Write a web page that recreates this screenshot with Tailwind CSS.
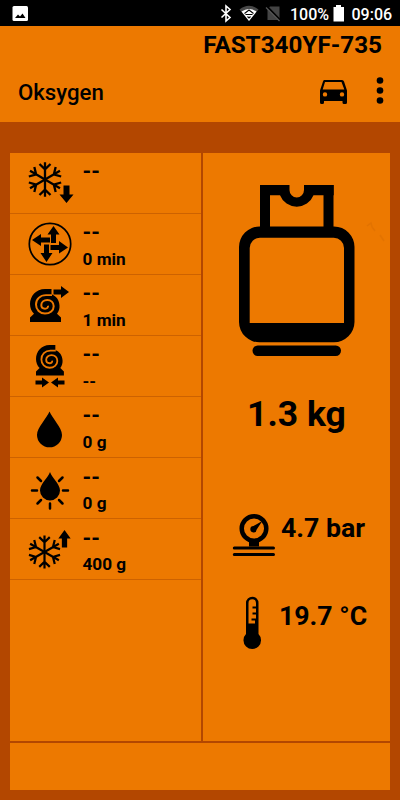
<!DOCTYPE html>
<html lang="en">
<head>
<meta charset="utf-8">
<title>Oksygen</title>
<script src="https://cdn.jsdelivr.net/npm/@tailwindcss/browser@4"></script>
</head>
<body class="w-[400px] h-[800px] overflow-hidden bg-[#b34700] font-['Roboto',sans-serif] text-black flex flex-col">
<svg class="hidden">
  <defs>
    <g id="flake" fill="none" stroke="#000" stroke-width="2.300">
      <g id="arm"><path d="M0 0V-17.3M-5.500 -15.500L0 -10.2L5.500 -15.500"/></g>
      <use href="#arm" transform="rotate(60)"/><use href="#arm" transform="rotate(120)"/><use href="#arm" transform="rotate(180)"/><use href="#arm" transform="rotate(240)"/><use href="#arm" transform="rotate(300)"/>
    </g>
    <path id="arrow" d="M0 -8.5L7 0H3V9H-3V0H-7Z"/>
    <g id="compressor">
      <path d="M21.500 0H15C6 0 0 7.500 0 15.500C0 19.500 1.500 23 4 25.500L0 29.500V34H31V29.500L27 25.500C29 23 29.700 20 29.500 17C29.200 11 26 7.500 21.500 5.500Z"/>
      <path d="M22 6.300H16C10 6.300 6 10.500 6 16C6 21.500 10 25.300 15 25.300C20 25.300 23.700 22 23.700 17.700C23.700 13.700 20.800 11.300 17.300 11.300C13.800 11.300 11.300 13.500 11.300 16.500C11.300 19 13 20.300 15 20.300C17 20.300 18.300 19 18 17.300" fill="none" stroke="#ed7900" stroke-width="2"/>
    </g>
  </defs>
</svg>

<div class="h-[26px] shrink-0 bg-black text-white flex">
  <svg class="w-[290px] h-[26px]" viewBox="0 0 290 26">
    <rect x="12.500" y="6" width="15.500" height="15" rx="1.500" fill="#fff"/>
    <path d="M15 18L18 14.500L20 16.500L22.500 13.500L25.500 18Z" fill="#000"/>
    <path d="M221.500 9.500L230 17.500L226 21V6L230 9.500L221.500 17.500" fill="none" stroke="#fff" stroke-width="1.600"/>
    <path d="M239.500 9.500Q249 2 258.500 9.500L249 21Z" fill="#484848"/>
    <path d="M241.500 11.500Q249 6.500 256.500 11.500L249 21Z" fill="#fff"/>
    <path d="M244.500 13.500L249 10L253.500 13.500M245.500 14.500H252.500M247.500 16.500L249 18L250.500 16.500" fill="none" stroke="#000" stroke-width="1.100"/>
    <path d="M270 6.500H279.500V20H267.500V9Z" fill="#444"/>
    <path d="M266.500 6L280.500 20.500" stroke="#000" stroke-width="2"/>
    <path d="M266 7.500L279.500 21" stroke="#555" stroke-width="1.200"/>
  </svg>
  <span class="w-[43px] text-[16px] leading-[29px] font-medium whitespace-nowrap">100%</span>
  <svg class="w-[18px] h-[26px]" viewBox="333 0 18 26"><path d="M336 5H341V7H344V21.500H333.500V7H336Z" fill="#fff"/></svg>
  <span class="pl-[0.500px] text-[16px] leading-[29px] font-medium whitespace-nowrap">09:06</span>
</div>

<header class="h-[96px] shrink-0 bg-[#ed7900] flex flex-col">
  <div class="h-[36px] pr-[18px] text-right text-[24.250px] leading-[38px] font-bold">FAST340YF-735</div>
  <div class="h-[60px] pl-[18px] flex justify-between">
    <h1 class="text-[22.200px] leading-[60px] font-medium">Oksygen</h1>
    <svg class="w-[90px] h-[60px]" viewBox="310 62 90 60">
      <path fill-rule="evenodd" d="M324 80H342Q343.500 80 344 81.500L347 90.500V102.500Q347 104 345.500 104H344Q342.500 104 342.500 102.500V101H324V102.500Q324 104 322.500 104H321.500Q320 104 320 102.500V90.500L323 81.500Q323.500 80 324 80ZM325 82L322.700 89.500H344.300L341.500 82ZM325 92.200A2.200 2.200 0 1 0 325 96.600A2.200 2.200 0 1 0 325 92.200ZM342 92.200A2.200 2.200 0 1 0 342 96.600A2.200 2.200 0 1 0 342 92.200Z"/>
      <circle cx="380" cy="80.500" r="3.300"/><circle cx="380" cy="90.500" r="3.300"/><circle cx="380" cy="100.500" r="3.300"/>
    </svg>
  </div>
</header>

<main class="mt-[31px] mx-[10px] h-[637px] shrink-0 flex flex-col gap-[2px]">
  <div class="h-[588px] flex gap-[2px]">
    <section class="w-[191px] bg-[#ed7900] flex flex-col">
      <div class="h-[61px] shrink-0 border-b border-[#cd6200] flex">
        <svg class="w-[72px] h-[60px]" viewBox="10 153 72 60"><use href="#flake" transform="translate(45 179.500)"/><use href="#arrow" transform="translate(66.500 194.500) rotate(180)"/></svg>
        <div class="pl-[0.500px] flex flex-col"><b class="h-[37px] text-[22px] leading-[38px]">--</b></div>
      </div>
      <div class="h-[61px] shrink-0 border-b border-[#cd6200] flex">
        <svg class="w-[72px] h-[60px]" viewBox="10 214 72 60"><circle cx="50" cy="244" r="20.700" fill="none" stroke="#000" stroke-width="1.700"/>
          <path d="M53.500 226L59.500 234.500H56V243H51V234.500H47.500ZM46.500 262L40.500 253H44V244.500H49V253H52.500ZM32 240L41 234V237.500H50V242.500H41V246ZM68 247.500L59 241V245H50.500V250H59V253.500Z"/></svg>
        <div class="pl-[0.500px] flex flex-col"><b class="h-[36px] text-[22px] leading-[38px]">--</b><b class="text-[17.200px] leading-[18px]">0 min</b></div>
      </div>
      <div class="h-[61px] shrink-0 border-b border-[#cd6200] flex">
        <svg class="w-[72px] h-[60px]" viewBox="10 275 72 60"><use href="#compressor" transform="translate(30 289) scale(1 .97)"/><path d="M53.500 289.500H61V286L69 292L61 298V294.500H53.500Z"/></svg>
        <div class="pl-[0.500px] flex flex-col"><b class="h-[36px] text-[22px] leading-[38px]">--</b><b class="text-[17.200px] leading-[18px]">1 min</b></div>
      </div>
      <div class="h-[61px] shrink-0 border-b border-[#cd6200] flex">
        <svg class="w-[72px] h-[60px]" viewBox="10 336 72 60"><use href="#compressor" transform="translate(36 345) scale(.9)"/><path d="M35.500 380.500H42V377.500L49 382.500L42 387.500V384.500H35.500ZM64.500 380.500H58V377.500L51 382.500L58 387.500V384.500H64.500Z"/></svg>
        <div class="pl-[0.500px] flex flex-col"><b class="h-[36px] text-[22px] leading-[38px]">--</b><b class="text-[17.200px] leading-[18px]">--</b></div>
      </div>
      <div class="h-[61px] shrink-0 border-b border-[#cd6200] flex">
        <svg class="w-[72px] h-[60px]" viewBox="10 397 72 60"><path d="M49.500 411.500C52 418 62 427.500 62 435A12.500 12.300 0 0 1 37 435C37 427.500 47 418 49.500 411.500Z"/></svg>
        <div class="pl-[0.500px] flex flex-col"><b class="h-[36px] text-[22px] leading-[38px]">--</b><b class="text-[17.200px] leading-[18px]">0 g</b></div>
      </div>
      <div class="h-[61px] shrink-0 border-b border-[#cd6200] flex">
        <svg class="w-[72px] h-[60px]" viewBox="10 458 72 60"><path d="M50 472C52 478 60 484 60 490.500A10 10 0 0 1 40 490.500C40 484 48 478 50 472Z"/><path d="M32 490.500H37M63 490.500H68M50 503.500V508.500M37.500 477.500L41 481M62.500 477.500L59 481M37.500 503.500L41 500M62.500 503.500L59 500" stroke="#000" stroke-width="2.500" stroke-linecap="round"/></svg>
        <div class="pl-[0.500px] flex flex-col"><b class="h-[36px] text-[22px] leading-[39px]">--</b><b class="text-[17.200px] leading-[18px]">0 g</b></div>
      </div>
      <div class="h-[61px] shrink-0 border-b border-[#cd6200] flex">
        <svg class="w-[72px] h-[60px]" viewBox="10 519 72 60"><use href="#flake" transform="translate(44.500 552) scale(.96)"/><use href="#arrow" transform="translate(64.500 538.500) scale(.88 1)"/></svg>
        <div class="pl-[0.500px] flex flex-col"><b class="h-[36px] text-[22px] leading-[40px]">--</b><b class="text-[17.200px] leading-[19px]">400 g</b></div>
      </div>
    </section>

    <section class="w-[187px] bg-[#ed7900] flex flex-col">
      <svg class="w-[187px] h-[227px] shrink-0" viewBox="203 153 187 227">
        <path d="M265 230V190H287M306 190H328.500V230" fill="none" stroke="#000" stroke-width="10"/>
        <path d="M260 185H289.500V190A7.250 7.500 0 0 0 304 190V185H333.700V195.300H313.500A18 18 0 0 1 280 195.300H260Z"/>
        <path fill-rule="evenodd" d="M260 226.500H334A20.500 20.500 0 0 1 354.500 247.500V322A20.500 20.500 0 0 1 334 342.300H260A20.500 20.500 0 0 1 239 322V247.500A20.500 20.500 0 0 1 260 226.500ZM260 237.700A10.300 10.300 0 0 0 249.700 248V323H344V248A10.300 10.300 0 0 0 333.700 237.700Z"/>
        <rect x="252.500" y="345.500" width="88.500" height="10.500" rx="5.200"/>
        <path d="M367 226L371 223L372 227L375 231M380 235L384 241" fill="none" stroke="#d96d00" stroke-opacity=".5" stroke-width="1.500"/>
      </svg>
      <div class="h-[68px] text-center text-[35.500px] leading-[69px] font-bold">1.3 kg</div>
      <div class="mt-[55px] h-[60px] shrink-0 flex">
        <svg class="w-[78px] h-[60px]" viewBox="203 503 78 60"><circle cx="254" cy="528.500" r="12.300" fill="none" stroke="#000" stroke-width="4.500"/><path d="M249 541H259V546.500H249ZM262.300 521L256.700 529.500A3.200 3.200 0 1 1 253.500 526Z"/><path d="M234.300 548H273.500M234.300 554.500H273.500" stroke="#000" stroke-width="3" stroke-linecap="round"/></svg>
        <span class="text-[26.700px] leading-[50px] font-bold whitespace-nowrap">4.7 bar</span>
      </div>
      <div class="mt-[27px] h-[65px] shrink-0 flex">
        <svg class="w-[76px] h-[65px]" viewBox="203 590 76 65"><path fill-rule="evenodd" d="M246 603A6 6 0 0 1 258.500 603V634A8.800 8.800 0 1 1 246 634ZM248.500 603V623.500H255V620.500H251.500V618.500H256V614.500H252.500V612.500H256V608.500H252.500V606.500H256V603A3.700 3.700 0 0 0 248.500 603Z"/></svg>
        <span class="text-[26.700px] leading-[53px] font-bold whitespace-nowrap">19.7 °C</span>
      </div>
    </section>
  </div>
  <footer class="h-[47px] bg-[#ed7900]"></footer>
</main>
</body>
</html>
